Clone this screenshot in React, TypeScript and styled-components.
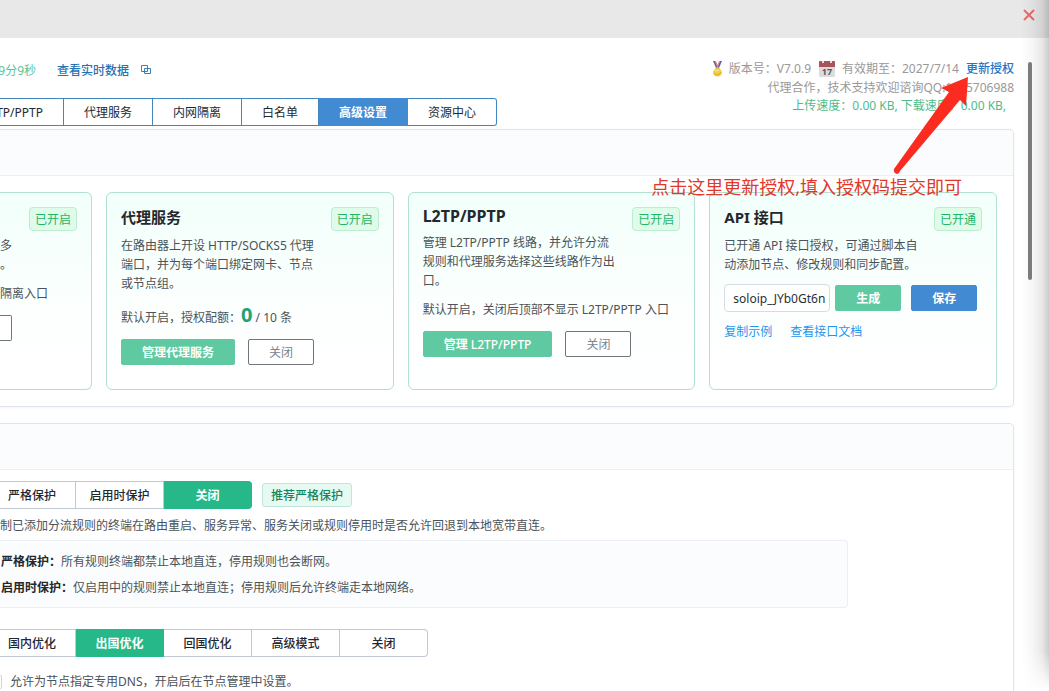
import React from "react";
import styled, { createGlobalStyle, css } from "styled-components";

const Global = createGlobalStyle`
  * { box-sizing: border-box; }
  html, body { margin: 0; }
  body {
    background: #fff;
    color: #4b5358;
    font-family: "Noto Sans", "Noto Sans CJK SC", sans-serif;
    font-size: 12px;
    line-height: 19px;
    overflow: hidden;
  }
  button, input { font: inherit; }
  h2, p { margin: 0; }
`;

const Window = styled.div`
  position: relative;
  height: 100vh;
  overflow: hidden;
`;

const EdgeShade = styled.div`
  position: absolute;
  top: 0;
  right: 0;
  bottom: 0;
  width: 28px;
  pointer-events: none;
  background: linear-gradient(to right, rgba(0, 0, 0, 0), rgba(0, 0, 0, 0.03) 40%, rgba(0, 0, 0, 0.09) 75%, rgba(0, 0, 0, 0.2));
  mask-image: linear-gradient(to top, transparent, #000 40px);
`;

const ScrollThumb = styled.div`
  position: absolute;
  top: 62px;
  right: 17px;
  width: 4px;
  height: 218px;
  border-radius: 2px;
  background: #7f7f7f;
`;

const TitleBar = styled.header`
  display: flex;
  justify-content: flex-end;
  height: 38px;
  padding: 9px 14px 0 0;
  background: #e8e8e8;
`;

const CloseButton = styled.button`
  display: block;
  width: 12px;
  height: 12px;
  padding: 0;
  border: 0;
  background: none;
  svg { display: block; }
`;

const Content = styled.main`
  padding-right: 35px;
`;

const TopArea = styled.div`
  display: flex;
  justify-content: space-between;
  align-items: flex-start;
  height: 91px;
  padding-top: 21px;
`;

const StatusLine = styled.div`
  display: flex;
  align-items: center;
  height: 22px;
`;

const Uptime = styled.span`
  display: flex;
  justify-content: flex-end;
  width: 36px;
  color: #5bc49b;
  white-space: nowrap;
`;

const LiveLink = styled.a`
  display: flex;
  align-items: center;
  gap: 12px;
  margin-left: 21px;
  color: #2474b4;
  font-weight: 500;
  text-decoration: none;
`;

const Tabs = styled.nav`
  display: flex;
  margin-top: 17px;
  height: 28px;
`;

const Tab = styled.button<{ $active?: boolean; $cut?: boolean }>`
  height: 28px;
  padding: 0 20px;
  border: 1px solid #4288bf;
  border-left-width: 0;
  background: #fff;
  color: #23292f;
  white-space: nowrap;
  ${(p) => p.$cut && css`display: flex; align-items: center; justify-content: flex-end; width: 64px; padding-left: 0;`}
  ${(p) => p.$active && css`background: #428bd2; border-color: #428bd2; color: #fff; font-weight: 600;`}
  &:last-child { border-radius: 0 3px 3px 0; }
`;

const License = styled.div`
  display: flex;
  flex-direction: column;
  align-items: flex-end;
  color: #999;
`;

const LicenseRow = styled.div`
  display: flex;
  align-items: center;
  height: 19px;
`;

const Version = styled.span`
  margin: 0 8px 0 5px;
`;

const Expiry = styled.span`
  margin: 0 7px;
`;

const RenewLink = styled.a`
  color: #2676c8;
  font-weight: 500;
  text-decoration: none;
`;

const Speed = styled.div`
  height: 18px;
  line-height: 18px;
  padding-right: 8px;
  color: #4dbb8e;
`;

const Panel = styled.section`
  margin-bottom: 16px;
  border: 1px solid #dfe3ec;
  border-left: 0;
  border-radius: 0 5px 5px 0;
  box-shadow: 0 1px 3px rgba(30, 50, 90, 0.05);
`;

const PanelHead = styled.div`
  height: 46px;
  border-bottom: 1px solid #eceff4;
  border-radius: 0 5px 0 0;
  background: #fbfcfe;
`;

const Cards = styled.div`
  display: grid;
  grid-template-columns: 92px repeat(3, minmax(0, 1fr));
  gap: 14px;
  padding: 16px;
  padding-left: 0;
`;

const Card = styled.article<{ $cut?: boolean }>`
  height: 198px;
  padding: 14px;
  border: 1px solid #b2e0d2;
  border-radius: 6px;
  background: linear-gradient(#f2fffa, #fcfffe 60%, #fff);
  ${(p) => p.$cut && css`padding-left: 0; border-left: 0; border-radius: 0 6px 6px 0;`}
`;

const CardHead = styled.div`
  display: flex;
  align-items: flex-start;
  gap: 16px;
`;

const CardIntro = styled.div`
  flex: 1;
  min-width: 0;
`;

const CardTitle = styled.h2<{ $latin?: boolean }>`
  margin-bottom: 8px;
  color: #23282c;
  font-size: ${(p) => (p.$latin ? 16 : 15)}px;
  font-weight: 700;
  line-height: ${(p) => (p.$latin ? 18 : 21)}px;
`;

const TitleSpace = styled.div`
  height: 29px;
`;

const Badge = styled.span`
  height: 24px;
  padding: 1px 5px 0;
  border: 1px solid #bbedd0;
  border-radius: 4px;
  background: #dffbea;
  color: #22b567;
  line-height: 22px;
  white-space: nowrap;
`;

const Note = styled.p`
  margin-top: 10px;
  white-space: nowrap;
`;

const Count = styled.strong`
  color: #27a07a;
  font-size: 20px;
  line-height: 24px;
`;

const Actions = styled.div`
  display: flex;
  gap: 13px;
  margin-top: 12px;
`;

const Button = styled.button<{ $tone: "green" | "blue" | "outline"; $cut?: boolean }>`
  height: 26px;
  padding: 1px 20px 0;
  border: 1px solid;
  border-radius: 2px;
  font-weight: 600;
  white-space: nowrap;
  color: #fff;
  ${(p) => p.$tone === "green" && css`background: #5fcaa1; border-color: #5fcaa1;`}
  ${(p) => p.$tone === "blue" && css`background: #428bd2; border-color: #428bd2;`}
  ${(p) => p.$tone === "outline" && css`background: #fff; border-color: #6f757b; color: #7b838b; font-weight: 400;`}
  ${(p) => p.$cut && css`width: 12px; padding: 0; border-left: 0; border-radius: 0 2px 2px 0;`}
`;

const LatinLabel = styled.span`
  font-weight: 500;
`;

const KeyRow = styled.div`
  display: flex;
  align-items: center;
  gap: 10px;
  margin-top: 10px;
`;

const KeyField = styled.input`
  width: 106px;
  height: 28px;
  margin-right: -5px;
  padding: 0 2px 0 8px;
  border: 1px solid #d8dce2;
  border-radius: 4px;
  background: #fff;
  color: #2b3035;
`;

const DocLinks = styled.div`
  display: flex;
  gap: 18px;
  margin-top: 10px;
  a { color: #1e96ee; text-decoration: none; }
`;

const Settings = styled.div`
  padding-top: 11px;
`;

const SegmentRow = styled.div`
  display: flex;
  align-items: center;
  gap: 10px;
`;

const Segments = styled.div`
  display: flex;
`;

const Segment = styled.button<{ $active?: boolean; $cut?: boolean }>`
  width: 88px;
  height: 28px;
  padding: 0;
  border: 1px solid #c2c9d5;
  border-left-width: 0;
  background: #fff;
  color: #1f2733;
  font-weight: 500;
  ${(p) => p.$cut && css`width: 76px; padding-right: 11px;`}
  ${(p) => p.$active && css`background: #26b889; border-color: #26b889; color: #fff; font-weight: 600;`}
  &:last-child { border-radius: 0 4px 4px 0; }
`;

const Hint = styled.span`
  height: 24px;
  padding: 1px 8px 0;
  border: 1px solid #bfe8da;
  border-radius: 3px;
  background: #e6faf2;
  color: #158560;
  font-weight: 500;
  line-height: 22px;
`;

const Description = styled.p`
  margin: 7px 0 5px;
  white-space: nowrap;
`;

const InfoBox = styled.div`
  width: 84%;
  max-width: 848px;
  margin-bottom: 21px;
  padding: 8px 0 6px 1px;
  border: 1px solid #eceff5;
  border-left: 0;
  border-radius: 0 4px 4px 0;
  background: #fbfcfe;
  line-height: 26px;
  white-space: nowrap;
  strong { color: #23282c; }
`;

const DnsOption = styled.label`
  display: flex;
  align-items: center;
  gap: 8px;
  margin-top: 15px;
  padding-bottom: 40px;
`;

const CutCheckbox = styled.input`
  appearance: none;
  width: 2px;
  height: 14px;
  margin: 0;
  border: 1px solid #cfd4dc;
  border-left: 0;
  border-radius: 0 2px 2px 0;
`;

const ArrowMark = styled.svg`
  position: absolute;
  top: 70px;
  right: 59px;
`;

const Callout = styled.div`
  position: absolute;
  top: 174px;
  right: 87px;
  color: #e2382b;
  font-size: 18px;
  line-height: 26px;
  white-space: nowrap;
`;

const Medal = () => (
  <svg width="13" height="16" viewBox="0 0 13 16" aria-hidden="true">
    <path d="M2 0h2l3 6-2 1z" fill="#5a679c" />
    <path d="M11 0H9L6 6l2 1z" fill="#5a679c" />
    <path d="M4 0h1l2 5-1 1zM9 0H8L6 5l1 1z" fill="#dc8b90" />
    <path d="M6.500 6L9 7.500 6.500 9 4 7.500z" fill="#e0b03a" />
    <ellipse cx="6.500" cy="11.500" rx="4.500" ry="4" fill="#f3cd45" />
    <path d="M3 12.500q3 3 7-1" stroke="#dba92c" fill="none" />
    <path d="M4 10.500q2-2 4-1" stroke="#fbe9a0" fill="none" />
  </svg>
);

const Calendar = () => (
  <svg width="16" height="16" viewBox="0 0 16 16" aria-hidden="true">
    <rect width="16" height="16" rx="1" fill="#dcdcde" />
    <path d="M0 1q0-1 1-1h14q1 0 1 1v5H0z" fill="#a9545a" />
    <path d="M3 1h2M11 1h2" stroke="#ecd9da" strokeWidth="2" />
    <text x="8" y="14" textAnchor="middle" fontSize="9" fontWeight="700" fill="#55585c">17</text>
  </svg>
);

export default function App() {
  return (
    <Window>
      <Global />
      <TitleBar>
        <CloseButton aria-label="关闭">
          <svg width="12" height="12" viewBox="0 0 12 12">
            <path d="M1 1l10 10M11 1L1 11" stroke="#ec6b6b" strokeWidth="2" />
          </svg>
        </CloseButton>
      </TitleBar>
      <Content>
        <TopArea>
          <div>
            <StatusLine>
              <Uptime>9分9秒</Uptime>
              <LiveLink href="#live">
                查看实时数据
                <svg width="10" height="10" viewBox="0 0 10 10" fill="none" stroke="#3a80b8">
                  <path d="M.5.5h6v6h-6zM3.500 3.500h6v5h-6z" />
                </svg>
              </LiveLink>
            </StatusLine>
            <Tabs>
              <Tab $cut>TP/PPTP</Tab>
              <Tab>代理服务</Tab>
              <Tab>内网隔离</Tab>
              <Tab>白名单</Tab>
              <Tab $active>高级设置</Tab>
              <Tab>资源中心</Tab>
            </Tabs>
          </div>
          <License>
            <LicenseRow>
              <Medal />
              <Version>版本号：V7.0.9</Version>
              <Calendar />
              <Expiry>有效期至：2027/7/14</Expiry>
              <RenewLink href="#renew">更新授权</RenewLink>
            </LicenseRow>
            <LicenseRow>代理合作，技术支持欢迎谘询QQ:1185706988</LicenseRow>
            <Speed>上传速度：0.00 KB, 下载速度：0.00 KB,</Speed>
          </License>
        </TopArea>

        <Panel>
          <PanelHead />
          <Cards>
            <Card $cut>
              <CardHead>
                <CardIntro>
                  <TitleSpace />
                  <p>多<br />。</p>
                </CardIntro>
                <Badge>已开启</Badge>
              </CardHead>
              <Note>隔离入口</Note>
              <Actions>
                <Button $tone="outline" $cut aria-label="关闭" />
              </Actions>
            </Card>
            <Card>
              <CardHead>
                <CardIntro>
                  <CardTitle>代理服务</CardTitle>
                  <p>在路由器上开设 HTTP/SOCKS5 代理端口，并为每个端口绑定网卡、节点或节点组。</p>
                </CardIntro>
                <Badge>已开启</Badge>
              </CardHead>
              <Note>默认开启，授权配额：<Count>0</Count> / 10 条</Note>
              <Actions>
                <Button $tone="green">管理代理服务</Button>
                <Button $tone="outline">关闭</Button>
              </Actions>
            </Card>
            <Card>
              <CardHead>
                <CardIntro>
                  <CardTitle $latin>L2TP/PPTP</CardTitle>
                  <p>管理 L2TP/PPTP 线路，并允许分流规则和代理服务选择这些线路作为出口。</p>
                </CardIntro>
                <Badge>已开启</Badge>
              </CardHead>
              <Note>默认开启，关闭后顶部不显示 L2TP/PPTP 入口</Note>
              <Actions>
                <Button $tone="green">管理 <LatinLabel>L2TP/PPTP</LatinLabel></Button>
                <Button $tone="outline">关闭</Button>
              </Actions>
            </Card>
            <Card>
              <CardHead>
                <CardIntro>
                  <CardTitle>API 接口</CardTitle>
                  <p>已开通 API 接口授权，可通过脚本自动添加节点、修改规则和同步配置。</p>
                </CardIntro>
                <Badge>已开通</Badge>
              </CardHead>
              <KeyRow>
                <KeyField aria-label="API" defaultValue="soloip_JYb0Gt6n" />
                <Button $tone="green">生成</Button>
                <Button $tone="blue">保存</Button>
              </KeyRow>
              <DocLinks>
                <a href="#example">复制示例</a>
                <a href="#docs">查看接口文档</a>
              </DocLinks>
            </Card>
          </Cards>
        </Panel>

        <Panel>
          <PanelHead />
          <Settings>
            <SegmentRow>
              <Segments>
                <Segment $cut>严格保护</Segment>
                <Segment>启用时保护</Segment>
                <Segment $active>关闭</Segment>
              </Segments>
              <Hint>推荐严格保护</Hint>
            </SegmentRow>
            <Description>制已添加分流规则的终端在路由重启、服务异常、服务关闭或规则停用时是否允许回退到本地宽带直连。</Description>
            <InfoBox>
              <p><strong>严格保护：</strong>所有规则终端都禁止本地直连，停用规则也会断网。</p>
              <p><strong>启用时保护：</strong>仅启用中的规则禁止本地直连；停用规则后允许终端走本地网络。</p>
            </InfoBox>
            <Segments>
              <Segment $cut>国内优化</Segment>
              <Segment $active>出国优化</Segment>
              <Segment>回国优化</Segment>
              <Segment>高级模式</Segment>
              <Segment>关闭</Segment>
            </Segments>
            <DnsOption>
              <CutCheckbox type="checkbox" />
              允许为节点指定专用DNS，开启后在节点管理中设置。
            </DnsOption>
          </Settings>
        </Panel>
      </Content>
      <ScrollThumb />
      <EdgeShade />
      <ArrowMark width="100" height="106" viewBox="890 70 100 106" aria-hidden="true">
        <path d="M968 77L941 88L949 92L894 169Q893 173 897 174Q899 174 900 171L960 100L966 106Z" fill="#fb2b1f" />
      </ArrowMark>
      <Callout>点击这里更新授权,填入授权码提交即可</Callout>
    </Window>
  );
}
